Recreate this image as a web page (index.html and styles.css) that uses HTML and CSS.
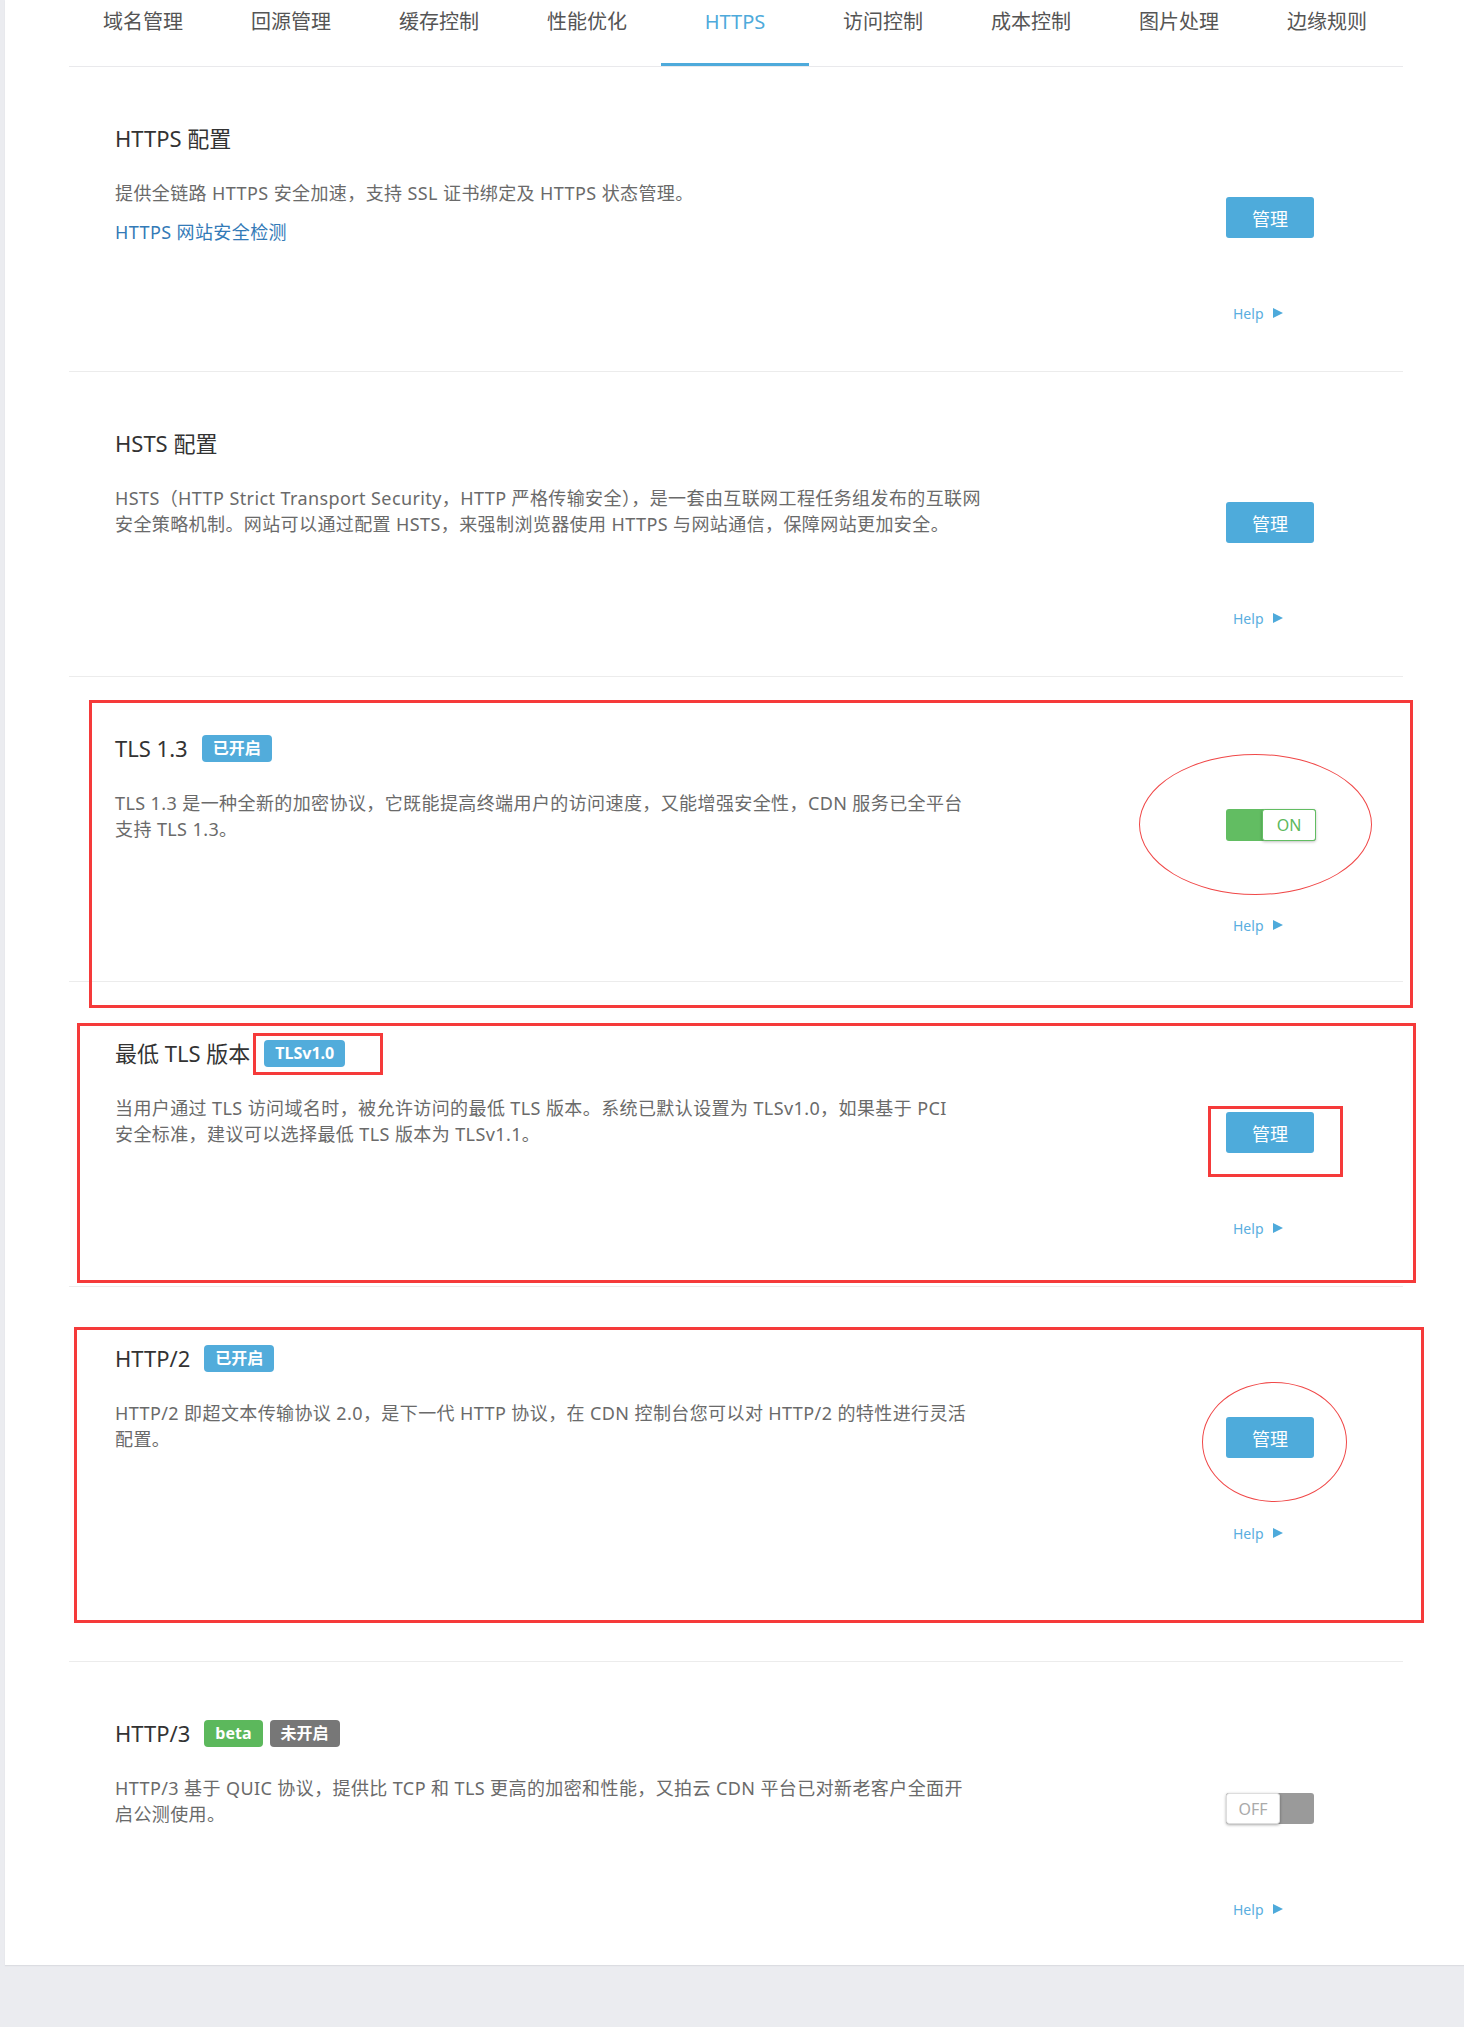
FILE: index.html
```html
<!DOCTYPE html>
<html lang="zh-CN">
<head>
<meta charset="utf-8">
<title>HTTPS</title>
<link rel="stylesheet" href="styles.css">
</head>
<body>
<div class="panel">
  <nav class="tabs">
    <div class="tab">域名管理</div>
    <div class="tab">回源管理</div>
    <div class="tab">缓存控制</div>
    <div class="tab">性能优化</div>
    <div class="tab tab-active">HTTPS</div>
    <div class="tab">访问控制</div>
    <div class="tab">成本控制</div>
    <div class="tab">图片处理</div>
    <div class="tab">边缘规则</div>
  </nav>

  <section class="item">
    <div class="item-main">
      <h3 class="item-title">HTTPS 配置</h3>
      <p class="item-desc">提供全链路 HTTPS 安全加速，支持 SSL 证书绑定及 HTTPS 状态管理。</p>
      <a class="item-link">HTTPS 网站安全检测</a>
    </div>
    <div class="item-side">
      <div class="control"><button class="btn">管理</button></div>
      <a class="help">Help <span class="tri"></span></a>
    </div>
  </section>

  <section class="item">
    <div class="item-main">
      <h3 class="item-title">HSTS 配置</h3>
      <p class="item-desc">HSTS（HTTP Strict Transport Security，HTTP 严格传输安全），是一套由互联网工程任务组发布的互联网<br>安全策略机制。网站可以通过配置 HSTS，来强制浏览器使用 HTTPS 与网站通信，保障网站更加安全。</p>
    </div>
    <div class="item-side">
      <div class="control"><button class="btn">管理</button></div>
      <a class="help">Help <span class="tri"></span></a>
    </div>
  </section>

  <section class="item">
    <div class="item-main">
      <h3 class="item-title">TLS 1.3 <span class="label label-blue">已开启</span></h3>
      <p class="item-desc">TLS 1.3 是一种全新的加密协议，它既能提高终端用户的访问速度，又能增强安全性，CDN 服务已全平台<br>支持 TLS 1.3。</p>
    </div>
    <div class="item-side">
      <div class="control">
        <div class="switch switch-on"><span class="switch-fill"></span><span class="switch-knob">ON</span></div>
      </div>
      <a class="help">Help <span class="tri"></span></a>
    </div>
  </section>

  <section class="item">
    <div class="item-main">
      <h3 class="item-title">最低 TLS 版本 <span class="label label-blue">TLSv1.0</span></h3>
      <p class="item-desc">当用户通过 TLS 访问域名时，被允许访问的最低 TLS 版本。系统已默认设置为 TLSv1.0，如果基于 PCI<br>安全标准，建议可以选择最低 TLS 版本为 TLSv1.1。</p>
    </div>
    <div class="item-side">
      <div class="control"><button class="btn">管理</button></div>
      <a class="help">Help <span class="tri"></span></a>
    </div>
  </section>

  <section class="item item-tall">
    <div class="item-main">
      <h3 class="item-title">HTTP/2 <span class="label label-blue">已开启</span></h3>
      <p class="item-desc">HTTP/2 即超文本传输协议 2.0，是下一代 HTTP 协议，在 CDN 控制台您可以对 HTTP/2 的特性进行灵活<br>配置。</p>
    </div>
    <div class="item-side">
      <div class="control"><button class="btn">管理</button></div>
      <a class="help">Help <span class="tri"></span></a>
    </div>
  </section>

  <section class="item item-last">
    <div class="item-main">
      <h3 class="item-title">HTTP/3 <span class="label label-green">beta</span><span class="label label-gray">未开启</span></h3>
      <p class="item-desc">HTTP/3 基于 QUIC 协议，提供比 TCP 和 TLS 更高的加密和性能，又拍云 CDN 平台已对新老客户全面开<br>启公测使用。</p>
    </div>
    <div class="item-side">
      <div class="control">
        <div class="switch switch-off"><span class="switch-knob">OFF</span><span class="switch-fill"></span></div>
      </div>
      <a class="help">Help <span class="tri"></span></a>
    </div>
  </section>
</div>

<div class="marks">
  <div class="mark-rect mark-tls13"></div>
  <div class="mark-ellipse mark-toggle"></div>
  <div class="mark-rect mark-mintls"></div>
  <div class="mark-rect mark-badge"></div>
  <div class="mark-rect mark-btn"></div>
  <div class="mark-rect mark-http2"></div>
  <div class="mark-ellipse mark-http2-btn"></div>
</div>
</body>
</html>
```

FILE: styles.css
```css
* { box-sizing: border-box; }

html, body {
  margin: 0;
  padding: 0;
}

body {
  position: relative;
  background: #ebecf0;
  font-family: "Noto Sans", "Noto Sans CJK SC", sans-serif;
  color: #333;
  min-height: 2027px;
}

.panel {
  margin-left: 5px;
  background: #fff;
  padding: 0 61px 0 64px;
  box-shadow: 0 1px 1px #dcdde2;
}

.tabs {
  display: flex;
  border-bottom: 1px solid #e9e9ec;
}

.tab {
  width: 148px;
  text-align: center;
  font-size: 20px;
  line-height: 44px;
  padding-bottom: 19px;
  border-bottom: 3px solid transparent;
  color: #555;
}

.tab-active {
  color: #4eaadb;
  border-bottom-color: #4eaadb;
}

.item {
  display: flex;
  height: 305px;
  border-bottom: 1px solid #ececec;
}

.item-tall { height: 375px; }
.item-last { height: 303px; border-bottom: none; }

.item-main {
  flex: 1;
  padding: 56px 0 0 46px;
}

.item-title {
  margin: 0;
  display: flex;
  align-items: center;
  font-size: 22px;
  font-weight: normal;
  line-height: 30px;
  color: #333;
}

.item-desc {
  margin: 27px 0 13px;
  font-size: 18px;
  letter-spacing: 0.4px;
  line-height: 26px;
  color: #6a6a6a;
}

.item-link {
  display: block;
  font-size: 18px;
  letter-spacing: 0.4px;
  line-height: 26px;
  color: #337ab7;
}

.label {
  display: inline-block;
  margin-left: 14px;
  padding: 0 11px;
  height: 27px;
  line-height: 27px;
  border-radius: 4px;
  font-size: 16px;
  font-weight: bold;
  color: #fff;
}

.label + .label { margin-left: 7px; }

.label-blue { background: #52acdb; }
.label-green { background: #5cb85c; }
.label-gray { background: #777; }

.item-side {
  width: 92px;
  margin-right: 85px;
  padding-top: 130px;
}

.control {
  height: 41px;
}

.btn {
  display: block;
  width: 88px;
  height: 41px;
  border: none;
  border-radius: 3px;
  background: #4eabdb;
  color: #fff;
  font-family: "Noto Sans CJK SC", sans-serif;
  font-size: 18px;
  padding: 0;
}

.help {
  display: flex;
  align-items: center;
  margin-top: 65px;
  padding-left: 7px;
  height: 20px;
  font-size: 14px;
  color: #5aaee0;
}

.tri {
  display: inline-block;
  margin-left: 9px;
  width: 0;
  height: 0;
  border-left: 10px solid #4eaadb;
  border-top: 5px solid transparent;
  border-bottom: 5px solid transparent;
}

.switch {
  display: flex;
  height: 32px;
  border-radius: 3px;
}

.switch-on {
  width: 90px;
  margin-top: 2px;
  background: #62bd62;
}

.switch-on .switch-fill { width: 36px; }

.switch-on .switch-knob {
  width: 54px;
  border: 1px solid #62bd62;
  color: #5cb85c;
  box-shadow: 0 1px 3px rgba(0, 0, 0, 0.25);
}

.switch-off {
  width: 88px;
  height: 31px;
  margin-top: 1px;
  background: #9a9a9a;
}

.switch-off .switch-fill { flex: 1; }

.switch-off .switch-knob {
  width: 54px;
  border: 1px solid #ddd;
  color: #aaa;
  box-shadow: 0 1px 3px rgba(0, 0, 0, 0.35);
}

.switch-knob {
  display: flex;
  align-items: center;
  justify-content: center;
  background: #fff;
  border-radius: 3px;
  font-size: 16px;
}

/* annotation marks drawn on top of the screenshot */
.marks {
  position: absolute;
  left: 0;
  top: 0;
  width: 0;
  height: 0;
}

.mark-rect {
  position: absolute;
  border: 3px solid #f53a3a;
}

.mark-ellipse {
  position: absolute;
  border: 1.5px solid #f04848;
  border-radius: 50%;
}

.mark-tls13 { left: 89px; top: 700px; width: 1324px; height: 308px; }
.mark-mintls { left: 77px; top: 1023px; width: 1339px; height: 260px; }
.mark-badge { left: 253px; top: 1033px; width: 130px; height: 42px; }
.mark-btn { left: 1208px; top: 1106px; width: 135px; height: 71px; }
.mark-http2 { left: 74px; top: 1327px; width: 1350px; height: 296px; }
.mark-toggle { left: 1139px; top: 754px; width: 233px; height: 141px; }
.mark-http2-btn { left: 1202px; top: 1382px; width: 145px; height: 120px; }
```
